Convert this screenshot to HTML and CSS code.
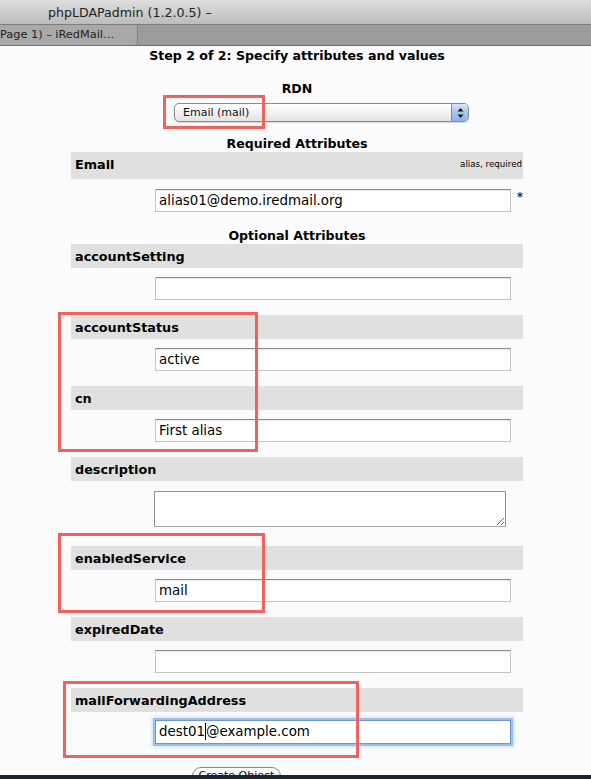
FILE: index.html
```html
<!DOCTYPE html>
<html lang="en">
<head>
<meta charset="utf-8">
<title>phpLDAPadmin (1.2.0.5)</title>
<link rel="stylesheet" href="styles.css">
</head>
<body>
<div class="window">
  <header class="titlebar"><span class="title">phpLDAPadmin (1.2.0.5) –</span></header>
  <nav class="tabbar"><div class="tab">Page 1) – iRedMail…</div><div class="tab-rest"></div></nav>
  <main class="page">
    <form class="form">
      <h1 class="step">Step 2 of 2: Specify attributes and values</h1>
      <h2 class="rdn-label">RDN</h2>
      <div class="select">
        <span class="select-text">Email (mail)</span>
        <span class="select-arrows">
          <svg width="7" height="12" viewBox="0 0 7 12"><path d="M3.5 1 L6.5 4.5 L0.5 4.5 Z" fill="#111"/><path d="M3.5 11 L6.5 7.5 L0.5 7.5 Z" fill="#111"/></svg>
        </span>
      </div>
      <h2 class="section">Required Attributes</h2>
      <div class="attr attr-required">
        <div class="bar bar-tall"><span class="name">Email</span><span class="hint">alias, required</span></div>
        <div class="field"><div class="input">alias01@demo.iredmail.org</div><span class="req">*</span></div>
      </div>
      <h2 class="section section-optional">Optional Attributes</h2>
      <div class="attr attr-first">
        <div class="bar"><span class="name">accountSetting</span></div>
        <div class="field"><div class="input"></div></div>
      </div>
      <div class="attr">
        <div class="bar"><span class="name">accountStatus</span></div>
        <div class="field"><div class="input">active</div></div>
      </div>
      <div class="attr">
        <div class="bar"><span class="name">cn</span></div>
        <div class="field"><div class="input">First alias</div></div>
      </div>
      <div class="attr">
        <div class="bar"><span class="name">description</span></div>
        <div class="field field-area"><textarea class="textarea" rows="2"></textarea></div>
      </div>
      <div class="attr attr-after-area">
        <div class="bar"><span class="name">enabledService</span></div>
        <div class="field"><div class="input">mail</div></div>
      </div>
      <div class="attr">
        <div class="bar"><span class="name">expiredDate</span></div>
        <div class="field"><div class="input"></div></div>
      </div>
      <div class="attr">
        <div class="bar"><span class="name">mailForwardingAddress</span></div>
        <div class="field field-focus"><div class="input input-focus">dest01<span class="caret"></span>@example.com</div></div>
      </div>
      <div class="actions"><span class="button">Create Object</span></div>
    </form>
  </main>
  <div class="dock"></div>
  <div class="callout callout-rdn"></div>
  <div class="callout callout-status"></div>
  <div class="callout callout-service"></div>
  <div class="callout callout-forward"></div>
</div>
</body>
</html>
```
FILE: styles.css
```css
* { box-sizing: border-box; }
html, body { margin: 0; padding: 0; }
body {
  width: 591px;
  height: 779px;
  overflow: hidden;
  background: #fbfbfd;
  font-family: "DejaVu Sans", Verdana, sans-serif;
  color: #000;
}
.window {
  position: relative;
  width: 591px;
  height: 779px;
  display: flex;
  flex-direction: column;
}
.titlebar {
  height: 24px;
  flex: none;
  background: linear-gradient(#dedede, #bcbcbc);
  padding-left: 48px;
  font-size: 12.6px;
  line-height: 25px;
  color: #222;
}
.tabbar {
  height: 22px;
  flex: none;
  display: flex;
  background: #9b9b9b;
  border-top: 1px solid #7c7c7c;
  border-bottom: 1px solid #6f6f6f;
}
.tab {
  width: 138px;
  background: #a9a9a9;
  border-right: 1px solid #7e7e7e;
  border-bottom-right-radius: 4px;
  font-size: 11.3px;
  line-height: 19px;
  color: #1e1e1e;
  white-space: nowrap;
  overflow: hidden;
}
.tab-rest { flex: 1; }
.page {
  flex: 1;
  overflow: hidden;
  padding-left: 71px;
}
.form {
  width: 452px;
  display: flex;
  flex-direction: column;
  margin: 0;
}
.step, .rdn-label, .section {
  margin: 0;
  font-size: 12.6px;
  font-weight: bold;
  line-height: 15px;
  height: 15px;
  text-align: center;
}
.step { margin-top: 2px; }
.rdn-label { margin-top: 18px; }
.select {
  margin-top: 7px;
  margin-left: 103px;
  width: 295px;
  height: 19px;
  display: flex;
  border: 1px solid #8c8c8c;
  border-radius: 5px;
  background: linear-gradient(#ffffff, #f4f4f4 45%, #e3e3e3);
  box-shadow: 0 1px 1px rgba(0,0,0,0.15);
  overflow: hidden;
}
.select-text {
  flex: 1;
  padding-left: 8px;
  font-size: 11px;
  line-height: 17px;
  color: #111;
}
.select-arrows {
  width: 17px;
  display: flex;
  align-items: center;
  justify-content: center;
  background: linear-gradient(#d7e6fa, #a8c7ef 50%, #8db5ea);
  border-left: 1px solid #6f8fc0;
}
.section { margin-top: 14px; }
.section-optional { margin-top: 16px; }
.attr { margin-top: 15px; }
.attr-required, .attr-first { margin-top: 1px; }
.attr-after-area { margin-top: 19px; }
.bar {
  height: 24px;
  background: #e0e0e0;
  display: flex;
  justify-content: space-between;
  padding: 5px 1px 0 4px;
}
.bar-tall { height: 27px; }
.name {
  font-size: 12.8px;
  font-weight: bold;
  line-height: 16px;
}
.hint {
  font-size: 8.7px;
  line-height: 12px;
  margin-top: 1px;
}
.field {
  margin-top: 9px;
  padding-left: 84px;
  display: flex;
  align-items: flex-start;
}
.attr-required .field { margin-top: 10px; }
.field-area { margin-top: 10px; padding-left: 83px; }
.field-focus { margin-top: 8px; }
.input {
  width: 356px;
  height: 23px;
  border: 1px solid #c4c4c4;
  border-top-color: #8a8a8a;
  background: #fff;
  box-shadow: inset 0 1px 1px rgba(0,0,0,0.08);
  padding-left: 3px;
  font-size: 13.4px;
  line-height: 21px;
  white-space: nowrap;
}
.input-focus {
  height: 24px;
  border: 1px solid #6d97cf;
  box-shadow: 0 0 0 2px #9cc0ec, 0 0 3px 3px rgba(110,160,225,0.35);
  line-height: 22px;
}
.caret {
  display: inline-block;
  width: 0;
  height: 17px;
  border-left: 1px solid #000;
  vertical-align: -4px;
}
.req {
  margin-left: 6px;
  font-size: 12px;
  font-weight: bold;
  line-height: 12px;
  color: #1c2f6e;
  margin-top: 2px;
}
.textarea {
  width: 352px;
  height: 36px;
  margin: 0;
  border: 1px solid #8e8e8e;
  border-bottom-color: #a6a6a6;
  background: #fff;
  font-family: "DejaVu Sans", sans-serif;
  font-size: 13px;
  resize: both;
  outline: none;
}
.actions {
  margin-top: 20px;
  padding-left: 121px;
}
.button {
  display: inline-block;
  width: 89px;
  height: 18px;
  border: 1px solid #8a8a8a;
  border-radius: 9px;
  background: linear-gradient(#ffffff, #e6e6e6);
  font-size: 11px;
  line-height: 16px;
  text-align: center;
  color: #111;
}
.dock {
  height: 4px;
  flex: none;
  background: #1a2331;
}
.callout {
  position: absolute;
  border: 3px solid #f2625a;
}
.callout-rdn { left: 163px; top: 95px; width: 102px; height: 34px; }
.callout-status { left: 58px; top: 312px; width: 200px; height: 140px; }
.callout-service { left: 58px; top: 533px; width: 207px; height: 80px; }
.callout-forward { left: 63px; top: 681px; width: 296px; height: 77px; }
```
